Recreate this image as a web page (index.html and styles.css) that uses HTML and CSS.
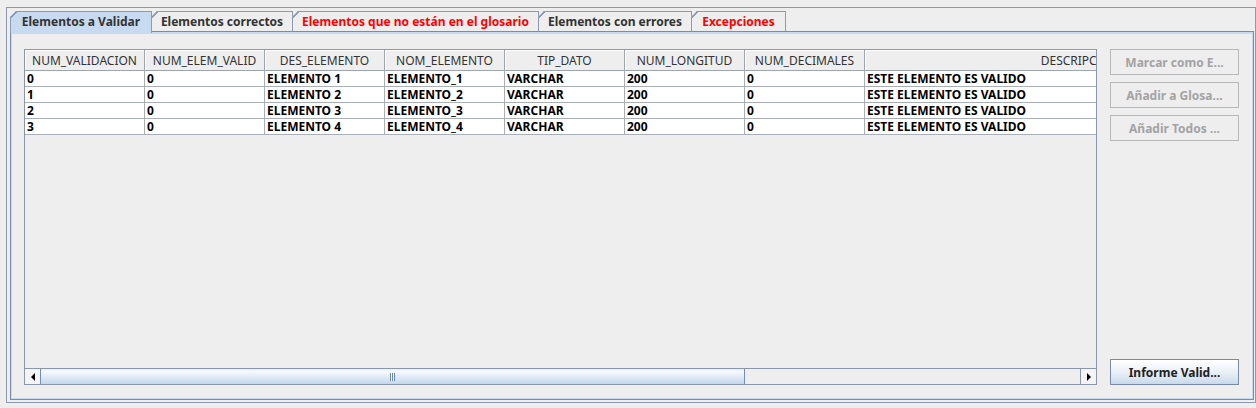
FILE: index.html
```html
<!DOCTYPE html>
<html lang="es">
<head>
<meta charset="utf-8">
<title>Validación de elementos</title>
<link rel="stylesheet" href="styles.css">
</head>
<body>
<div class="frame">
  <div class="tabs">
    <div class="tab sel t1">Elementos a Validar</div>
    <div class="tab t2">Elementos correctos</div>
    <div class="tab red t3">Elementos que no están en el glosario</div>
    <div class="tab t4">Elementos con errores</div>
    <div class="tab red t5">Excepciones</div>
  </div>
  <div class="content">
    <div class="pane">
      <div class="viewport">
        <table class="grid">
          <colgroup>
            <col class="c"><col class="c"><col class="c"><col class="c"><col class="c"><col class="c"><col class="c"><col class="cdesc">
          </colgroup>
          <thead>
            <tr>
              <th>NUM_VALIDACION</th><th>NUM_ELEM_VALID</th><th>DES_ELEMENTO</th><th>NOM_ELEMENTO</th><th>TIP_DATO</th><th>NUM_LONGITUD</th><th>NUM_DECIMALES</th><th>DESCRIPCION</th>
            </tr>
          </thead>
          <tbody>
            <tr><td>0</td><td>0</td><td>ELEMENTO 1</td><td>ELEMENTO_1</td><td>VARCHAR</td><td>200</td><td>0</td><td>ESTE ELEMENTO ES VALIDO</td></tr>
            <tr><td>1</td><td>0</td><td>ELEMENTO 2</td><td>ELEMENTO_2</td><td>VARCHAR</td><td>200</td><td>0</td><td>ESTE ELEMENTO ES VALIDO</td></tr>
            <tr><td>2</td><td>0</td><td>ELEMENTO 3</td><td>ELEMENTO_3</td><td>VARCHAR</td><td>200</td><td>0</td><td>ESTE ELEMENTO ES VALIDO</td></tr>
            <tr><td>3</td><td>0</td><td>ELEMENTO 4</td><td>ELEMENTO_4</td><td>VARCHAR</td><td>200</td><td>0</td><td>ESTE ELEMENTO ES VALIDO</td></tr>
          </tbody>
        </table>
      </div>
      <div class="hbar">
        <div class="arrow left"><span class="tri-l"></span></div>
        <div class="track"><div class="thumb"><span class="grip"></span></div></div>
        <div class="arrow right"><span class="tri-r"></span></div>
      </div>
    </div>
    <div class="actions">
      <div class="top-btns">
        <button class="btn" disabled>Marcar como E...</button>
        <button class="btn" disabled>Añadir a Glosa...</button>
        <button class="btn" disabled>Añadir Todos ...</button>
      </div>
      <button class="btn primary">Informe Valid...</button>
    </div>
  </div>
</div>
</body>
</html>
```
FILE: styles.css
```css
html, body {
  margin: 0;
  padding: 0;
  background: #eeeeee;
}
body {
  font-family: "Noto Sans", "Open Sans", sans-serif;
  font-size: 12px;
  color: #333333;
}
.frame {
  margin: 7px 0 0 6px;
  width: 1250px;
  height: 396px;
  box-sizing: border-box;
  border: 1px solid #8d99ad;
  padding: 3px 1px 2px 3px;
  display: flex;
  flex-direction: column;
}
.tabs {
  display: flex;
  height: 20px;
  position: relative;
  z-index: 2;
}
.tab {
  box-sizing: border-box;
  height: 20px;
  border: 1px solid #8e9aaf;
  border-bottom: none;
  text-align: center;
  font-weight: bold;
  line-height: 19px;
  white-space: nowrap;
  position: relative;
  background: #eeeeee;
  clip-path: polygon(6px 0, 100% 0, 100% 100%, 0 100%, 0 6px);
}
.tab + .tab { margin-left: -1px; }
.tab::before {
  content: "";
  position: absolute;
  left: -1px;
  top: -1px;
  width: 7px;
  height: 7px;
  background: linear-gradient(to bottom right, transparent 42%, #8e9aaf 42%, #8e9aaf 58%, transparent 58%);
}
.tab.sel {
  background: #c8daf0;
  height: 22px;
  margin-bottom: -2px;
  z-index: 3;
}
.tab.red { color: #ff0000; }
.t1 { width: 142px; }
.t2 { width: 142px; }
.t3 { width: 247px; }
.t4 { width: 154px; }
.t5 { width: 95px; }

.content {
  flex: 1;
  display: flex;
  gap: 13px;
  border: 1px solid #7a8aa8;
  box-shadow: inset 1px 2px 0 #c8daf0, inset -1px -1px 0 #c8daf0;
  padding: 17px 14px 14px 13px;
  min-height: 0;
}
.pane {
  flex: 1;
  display: flex;
  flex-direction: column;
  box-sizing: border-box;
  border: 1px solid #8a96aa;
  min-width: 0;
}
.viewport {
  flex: 1;
  overflow: hidden;
  background: #eeeeee;
}
.grid {
  border-collapse: separate;
  border-spacing: 0;
  table-layout: fixed;
  width: 1271px;
}
.grid col.c { width: 120px; }
.grid col.cdesc { width: 431px; }
.grid th {
  box-sizing: border-box;
  height: 21px;
  padding: 0 2px;
  font-weight: normal;
  color: #333333;
  text-align: center;
  white-space: nowrap;
  overflow: hidden;
  border-right: 1px solid #9da5b2;
  border-bottom: 1px solid #9da5b2;
  background: #eeeeee;
  box-shadow: inset 1px 1px 0 #ffffff;
}
.grid td {
  box-sizing: border-box;
  height: 16px;
  padding: 0 2px 0 2px;
  line-height: 15px;
  font-weight: bold;
  color: #000000;
  white-space: nowrap;
  overflow: hidden;
  background: #ffffff;
  border-right: 1px solid #a9afb8;
  border-bottom: 1px solid #a9afb8;
}

.hbar {
  display: flex;
  height: 15px;
  border-top: 1px solid #8a96aa;
}
.arrow {
  width: 15px;
  background: #f4f4f4;
  display: flex;
  align-items: center;
  justify-content: center;
}
.arrow.right {
  border-left: 1px solid #8a96aa;
}
.tri-l {
  width: 0;
  height: 0;
  border-top: 4px solid transparent;
  border-bottom: 4px solid transparent;
  border-right: 4px solid #000000;
}
.tri-r {
  width: 0;
  height: 0;
  border-top: 4px solid transparent;
  border-bottom: 4px solid transparent;
  border-left: 4px solid #000000;
}
.track {
  flex: 1;
  display: flex;
  background: #eeeeee;
}
.thumb {
  box-sizing: border-box;
  width: 705px;
  border-left: 1px solid #6f8cc4;
  border-right: 1px solid #6f8cc4;
  background: linear-gradient(to bottom, #e6eef8 0%, #f7fafd 18%, #e2ebf6 50%, #c6d7eb 100%);
  display: flex;
  align-items: center;
  justify-content: center;
}
.grip {
  width: 5px;
  height: 8px;
  background: repeating-linear-gradient(to right, #6a84bd 0 1px, #ffffff 1px 2px);
}

.actions {
  width: 129px;
  display: flex;
  flex-direction: column;
  justify-content: space-between;
}
.top-btns {
  display: flex;
  flex-direction: column;
  gap: 7px;
}
.btn {
  box-sizing: border-box;
  width: 129px;
  height: 26px;
  margin: 0;
  padding: 0 4px;
  font-family: "Noto Sans", "Open Sans", sans-serif;
  font-size: 12px;
  font-weight: bold;
  white-space: nowrap;
  border: 1px solid #b8b8b8;
  background: #eeeeee;
  color: #a3a3a3;
  border-radius: 0;
}
.btn.primary {
  border: 1px solid #7a8aa8;
  color: #222222;
  background: linear-gradient(to bottom, #ffffff 0%, #f1f5fa 35%, #dde8f3 70%, #c9d9ea 100%);
}
```
